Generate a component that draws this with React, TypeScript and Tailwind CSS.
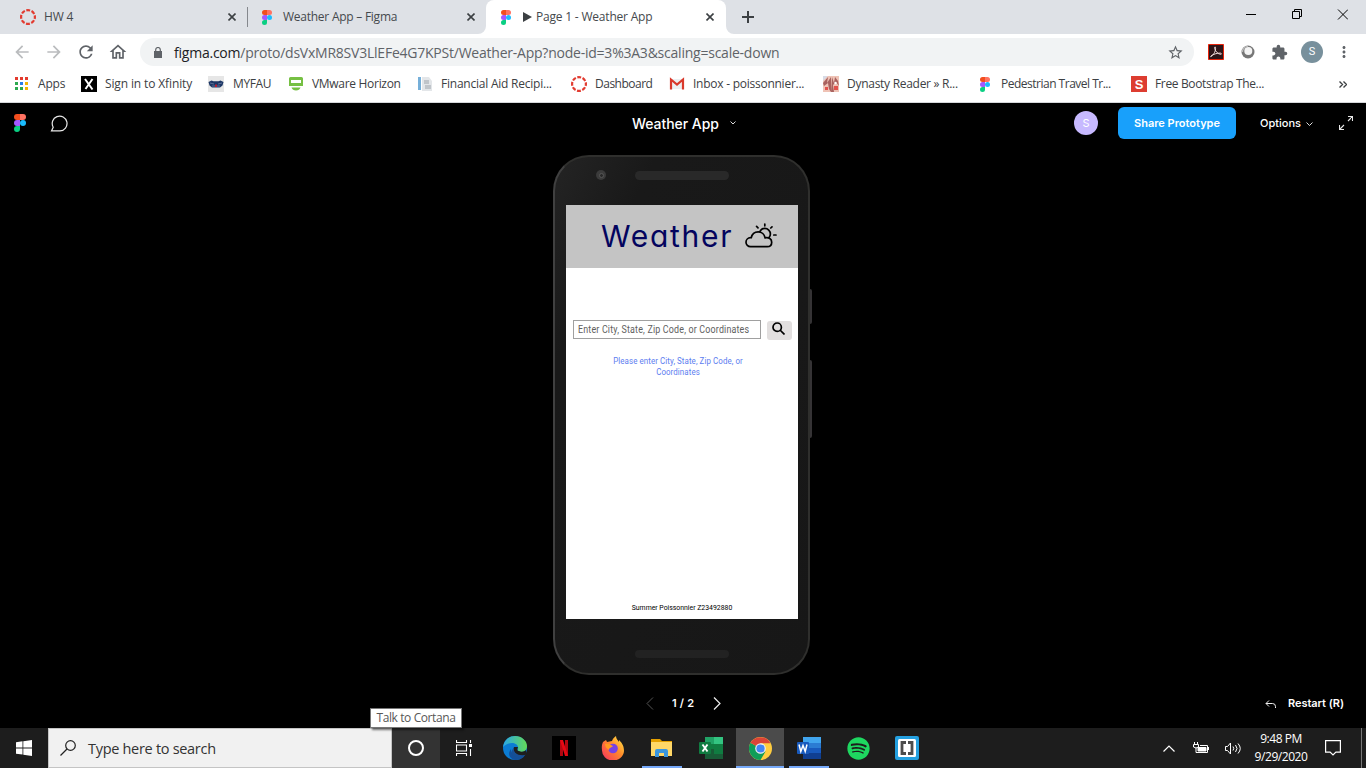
import type { ReactNode } from "react";
import {
  MdArrowBack,
  MdArrowForward,
  MdExtension,
  MdMoreVert,
  MdOutlineHome,
  MdRefresh,
  MdStarBorder,
} from "react-icons/md";
import { FaSpotify } from "react-icons/fa";

const segoe = "font-['Open_Sans','Noto_Sans',sans-serif]";

function FigmaLogo({ className }: { className: string }) {
  return (
    <svg viewBox="0 0 38 57" className={className}>
      <path fill="#1abcfe" d="M19 28.5a9.5 9.5 0 1 1 19 0 9.5 9.5 0 0 1-19 0z" />
      <path fill="#0acf83" d="M0 47.5A9.5 9.5 0 0 1 9.500 38H19v9.500a9.500 9.500 0 1 1-19 0z" />
      <path fill="#ff7262" d="M19 0v19h9.500a9.500 9.500 0 1 0 0-19H19z" />
      <path fill="#f24e1e" d="M0 9.500A9.500 9.500 0 0 0 9.500 19H19V0H9.500A9.500 9.500 0 0 0 0 9.500z" />
      <path fill="#a259ff" d="M0 28.500A9.500 9.500 0 0 0 9.500 38H19V19H9.500A9.500 9.500 0 0 0 0 28.500z" />
    </svg>
  );
}

function CanvasLogo() {
  return (
    <svg viewBox="0 0 16 16" className="size-4 shrink-0">
      <circle cx="8" cy="8" r="6.900" fill="none" stroke="#e23b30" strokeWidth="2.200" strokeDasharray="3.900 1.520" strokeDashoffset="1.950" />
    </svg>
  );
}

function CloseIcon() {
  return (
    <svg viewBox="0 0 8 8" className="size-2 shrink-0">
      <path d="M.5.5l7 7M7.500.5l-7 7" stroke="#3c4043" strokeWidth="1.600" />
    </svg>
  );
}

function TabStrip() {
  return (
    <div className="flex h-[34px] bg-[#dee1e6] text-[12px] text-[#45494d]">
      <div className="flex w-[247px] items-center pl-5 pr-[11px]">
        <CanvasLogo />
        <span className="ml-[8px] grow tracking-[-0.2px]">HW 4</span>
        <CloseIcon />
      </div>
      <div className="mt-[7px] h-5 w-px bg-[#85888d]" />
      <div className="flex w-[238px] items-end">
        <div className="flex h-[34px] w-[230px] items-center pl-[14px] pr-[3px]">
          <FigmaLogo className="h-[15px] w-[10px]" />
          <span className="ml-[11px] grow whitespace-nowrap tracking-[-0.25px]">Weather App – Figma</span>
          <CloseIcon />
        </div>
        <svg viewBox="0 0 8 8" className="size-2">
          <path d="M8 0v8H0a8 8 0 0 0 8-8z" fill="#fff" />
        </svg>
      </div>
      <div className="flex w-[240px] items-center rounded-t-lg bg-white pl-[15px] pr-[12px]">
        <FigmaLogo className="h-[15px] w-[10px]" />
        <svg viewBox="0 0 9 10" className="ml-3 mr-1 h-[10px] w-[9px]">
          <path d="M0 0l9 5-9 5z" fill="#3c4043" />
        </svg>
        <span className="grow whitespace-nowrap tracking-[-0.2px]">Page 1 - Weather App</span>
        <CloseIcon />
      </div>
      <div className="flex w-2 items-end">
        <svg viewBox="0 0 8 8" className="size-2">
          <path d="M0 0v8h8a8 8 0 0 1-8-8z" fill="#fff" />
        </svg>
      </div>
      <svg viewBox="0 0 12 12" className="ml-2 mt-[11px] size-3">
        <path d="M6 0v12M0 6h12" stroke="#3c4043" strokeWidth="2" />
      </svg>
      <div className="ml-auto flex pr-[18px] pt-[9px]">
        <svg viewBox="0 0 102 11" className="h-[11px] w-[102px]" fill="none" stroke="#000" strokeWidth="1">
          <path d="M0 5.500h10M46.500 2.500h7v7h-7zM48.500 2.500v-2h7v7h-2M92 .5l10 10M102 .5l-10 10" />
        </svg>
      </div>
    </div>
  );
}

function Toolbar() {
  return (
    <div className="flex h-9 items-center bg-white text-[#5f6368]">
      <div className="flex w-[140px] items-center gap-3 pl-3">
        <MdArrowBack size={20} color="#babcbe" />
        <MdArrowForward size={20} color="#babcbe" />
        <MdRefresh size={20} />
        <MdOutlineHome size={20} />
      </div>
      <div className="flex h-7 w-[1054px] items-center rounded-full bg-[#f1f3f4] pl-[14px] pr-[10px]">
        <svg viewBox="0 0 8 11" className="h-[11px] w-2">
          <path d="M0 4h8v7H0z" fill="#5f6368" />
          <path d="M1.700 4V2.800a2.300 2.300 0 0 1 4.600 0V4" fill="none" stroke="#5f6368" strokeWidth="1.200" />
        </svg>
        <span className="ml-3 grow whitespace-nowrap text-[14px] tracking-[-0.23px]">
          <span className="text-[#202124]">figma.com</span>/proto/dsVxMR8SV3LlEFe4G7KPSt/Weather-App?node-id=3%3A3&amp;scaling=scale-down
        </span>
        <MdStarBorder size={17} />
      </div>
      <svg viewBox="0 0 16 16" className="ml-[14px] size-4">
        <path d="M.5.5h15v15H.5z" fill="#2d1518" stroke="#e8230b" />
        <path d="M3 12.500c3-2 5-6 4.500-9-.2-1.300-1.200-.6-.8 1 .8 3 3 5.500 6 5.800 1.300 0 .9-1.300-.9-1.200-3 .1-6.300 1-8.800 2.900-.6.7-.4.9 0 .5z" fill="none" stroke="#f3dfdd" />
      </svg>
      <svg viewBox="0 0 14 14" className="ml-[17px] size-[14px]">
        <circle cx="7" cy="7" r="6.500" fill="#777" />
        <circle cx="7.300" cy="6" r="4" fill="#f4f4f4" />
        <path d="M1.500 7A5.500 5.500 0 0 1 7 1.300" fill="none" stroke="#bbb" strokeWidth="1.200" />
      </svg>
      <MdExtension size={17} className="ml-[16px]" />
      <div className="ml-[13px] flex size-[22px] items-center justify-center rounded-full bg-[#78909c] font-['Roboto',sans-serif] text-[11px] text-white">S</div>
      <MdMoreVert size={18} className="ml-3" />
    </div>
  );
}

const bookmarks: { label: string; box: string; icon: ReactNode }[] = [
  {
    label: "Apps",
    box: "w-[67px] tracking-[-0.2px]",
    icon: (
      <svg viewBox="0 0 16 16" className="size-4 shrink-0">
        <path d="M1 1h3v3H1zM6 1h3v3H6zM11 1h3v3h-3z" fill="#e33b2e" />
        <path d="M1 6h3v3H1zM1 11h3v3H1zM6 11h3v3H6z" fill="#2da94f" />
        <path d="M6 6h3v3H6z" fill="#2a7de9" />
        <path d="M11 6h3v3h-3zM11 11h3v3h-3z" fill="#f5b400" />
      </svg>
    ),
  },
  {
    label: "Sign in to Xfinity",
    box: "w-[127px] tracking-[-0.13px]",
    icon: (
      <svg viewBox="0 0 16 16" className="size-4 shrink-0">
        <path d="M0 0h16v16H0z" />
        <path d="M4 3l7.500 10.500M11.500 3L4.500 13" stroke="#fff" strokeWidth="2" />
      </svg>
    ),
  },
  {
    label: "MYFAU",
    box: "w-[80px] tracking-[-0.4px]",
    icon: (
      <svg viewBox="0 0 16 16" className="mr-px size-4 shrink-0">
        <path d="M0 0h16v16H0z" fill="#e6e6e6" />
        <path d="M.5 6l3-1.500 2 .8h5l2-.8 3 1.500-1 3.500L12 11.500H4L1.500 9.500z" fill="#1d3766" />
        <path d="M2 7l4 1M14 7l-4 1M4 10h8" stroke="#6d7ea3" strokeWidth=".8" />
        <path d="M7 8.500h2V11H7z" fill="#b62034" />
      </svg>
    ),
  },
  {
    label: "VMware Horizon",
    box: "w-[129px] tracking-[-0.3px]",
    icon: (
      <svg viewBox="0 0 16 16" className="size-4 shrink-0">
        <path d="M2.500 1h11A1.500 1.500 0 0 1 15 2.500V10H1V2.500A1.500 1.500 0 0 1 2.500 1z" fill="#76c043" />
        <path d="M3 4h10v3H3z" fill="#fff" />
        <path d="M3.500 11.500h9q-1 3-4.500 3t-4.500-3z" fill="#76c043" />
      </svg>
    ),
  },
  {
    label: "Financial Aid Recipi...",
    box: "w-[154px] tracking-[-0.23px]",
    icon: (
      <svg viewBox="0 0 16 16" className="size-4 shrink-0">
        <path d="M1 1h3v13H1z" fill="#75afd9" />
        <path d="M5 1h7l3 4v10H5z" fill="#e3e6e9" />
        <path d="M7 5h5M7 7h5M8 10h6M8 12h6" stroke="#9ca3aa" />
      </svg>
    ),
  },
  { label: "Dashboard", box: "w-[98px] tracking-[-0.5px]", icon: <CanvasLogo /> },
  {
    label: "Inbox - poissonnier...",
    box: "w-[154px] tracking-[-0.25px]",
    icon: (
      <svg viewBox="0 0 16 16" className="size-4 shrink-0">
        <path d="M2 3h12v10H2z" fill="#eceff1" />
        <path d="M2 13.500V3.500l6 5 6-5v10" fill="none" stroke="#d9392c" strokeWidth="2.200" />
      </svg>
    ),
  },
  {
    label: "Dynasty Reader » R...",
    box: "w-[154px] tracking-[-0.28px]",
    icon: (
      <svg viewBox="0 0 16 16" className="size-4 shrink-0">
        <path d="M0 0h16v16H0z" fill="#efc3b6" />
        <path d="M0 0h5L0 5z" fill="#d7dbe6" />
        <path d="M0 7l5-6-1 6 4-6v15l-2-3-1-6-4 3zM9 1l2 6 1-6 3 4 1 5-3-4-3 3 1 7H8z" fill="#a8625f" />
        <path d="M11 10h4v4h-4zM2 11h3v3H2z" fill="#e2534e" />
        <circle cx="12.500" cy="7" r="1.200" fill="#fff" />
      </svg>
    ),
  },
  {
    label: "Pedestrian Travel Tr...",
    box: "w-[154px] tracking-[-0.5px]",
    icon: <FigmaLogo className="ml-[3px] mr-[3px] h-[15px] w-[10px] shrink-0" />,
  },
  {
    label: "Free Bootstrap The...",
    box: "w-[150px] tracking-[-0.35px]",
    icon: (
      <span className="flex size-4 shrink-0 items-center justify-center bg-[#dd3d31] font-['Liberation_Sans',sans-serif] text-[13px] font-bold leading-none text-white">S</span>
    ),
  },
];

function BookmarksBar() {
  return (
    <div className="flex h-[33px] items-center border-b border-[#d5d7da] bg-white pb-[6px] pl-[14px] pt-[2px] text-[12px] text-[#3c4043]">
      {bookmarks.map((b) => (
        <div key={b.label} className={`flex shrink-0 items-center gap-2 whitespace-nowrap ${b.box}`}>
          {b.icon}
          <span>{b.label}</span>
        </div>
      ))}
      <svg viewBox="0 0 8 7" className="ml-auto mr-[19px] h-[7px] w-2">
        <path d="M.5.5l3 3-3 3M4.500.5l3 3-3 3" fill="none" stroke="#3c4043" strokeWidth="1.400" />
      </svg>
    </div>
  );
}

function PrototypeHeader() {
  return (
    <div className="flex h-[41px] items-center pb-px font-['Inter',sans-serif] text-white">
      <div className="flex w-[632px] items-center pl-[14px]">
        <FigmaLogo className="h-[18px] w-3" />
        <svg viewBox="0 0 18 17" className="ml-6 h-[17px] w-[18px]" fill="none" stroke="#e8e8e8" strokeWidth="1.200">
          <path d="M3.200 12.200A7.400 7.400 0 1 1 10 15.900H1.500z" />
        </svg>
      </div>
      <div className="flex w-[442px] items-center">
        <span className="whitespace-nowrap text-[14px] font-medium tracking-[-0.05px]">Weather App</span>
        <svg viewBox="0 0 6 4" className="ml-[11px] h-1 w-[6px]">
          <path d="M.5.5L3 3 5.500.5" fill="none" stroke="#ddd" />
        </svg>
      </div>
      <div className="flex size-6 items-center justify-center rounded-full bg-[#c7b9ff] text-[11px]">S</div>
      <div className="ml-5 flex h-8 w-[118px] items-center justify-center whitespace-nowrap rounded-md bg-[#18a0fb] text-[11px] font-semibold">Share Prototype</div>
      <span className="ml-6 text-[11px] font-medium">Options</span>
      <svg viewBox="0 0 7 4" className="ml-[5px] mt-0.5 h-1 w-[7px]">
        <path d="M.5.500L3.500 3.500 6.500.5" fill="none" stroke="#ddd" />
      </svg>
      <svg viewBox="0 0 14 14" className="ml-auto mr-[13px] size-[14px]" fill="none" stroke="#e8e8e8" strokeWidth="1.100">
        <path d="M9 .500h4.500v4.500M13.500.500L9 5M.5 9v4.500h4.500M.5 13.500L5 9" />
      </svg>
    </div>
  );
}

function PhoneScreen() {
  return (
    <div className="flex h-[414px] w-[232px] flex-col bg-white font-['Roboto',sans-serif]">
      <div className="flex h-[63px] items-center bg-[#c4c4c4] pb-px pl-[35px]">
        <span className="w-[144px] whitespace-nowrap font-['Inter',sans-serif] text-[30px] font-[380] leading-none tracking-[1.700px] text-[#03045e] [font-feature-settings:'cv11']">Weather</span>
        <svg viewBox="0 0 32 26" className="h-[26px] w-8" fill="none" stroke="#000" strokeWidth="1.700" strokeLinecap="round">
          <circle cx="19.800" cy="11" r="5.600" />
          <path d="M5.500 23.700a4.500 4.500 0 0 1 0-9h.8C7 11 9.800 8.800 13.200 8.800c3.500 0 6.300 2.600 6.900 6 3.800-.6 6.600 1.200 6.600 4.400 0 2.700-1.800 4.500-4.500 4.500z" fill="#c4c4c4" />
          <path d="M19.800 1v1.800M25.800 5L27 3.800M28.800 12h2.200M13 4.800l-1.400-1.400" />
        </svg>
      </div>
      <div className="mt-[52px] flex h-5 items-start pl-[7px]">
        <div className="flex h-[19px] w-[188px] items-center border border-[#a0a0a0] pl-1">
          <span className="origin-left scale-x-[.89] whitespace-nowrap text-[10px] tracking-[0.2px] text-[#606060]">Enter City, State, Zip Code, or Coordinates</span>
        </div>
        <div className="ml-[6px] mt-px flex h-[19px] w-[25px] items-center justify-center rounded-[3px] bg-[#e2dfdf] pb-1 pr-0.5">
          <svg viewBox="0 0 13 13" className="size-[13px]" fill="none" stroke="#000" strokeWidth="1.700">
            <path d="M8 8l4.500 4.500" />
            <circle cx="5.200" cy="5.200" r="4.200" />
          </svg>
        </div>
      </div>
      <p className="mr-[8px] mt-[16px] scale-x-[.88] text-center text-[9px] leading-[10.500px] tracking-[0.1px] text-[#5c7df0]">
        Please enter City, State, Zip Code, or
        <br />
        Coordinates
      </p>
      <p className="mb-[6px] mt-auto scale-x-[.86] text-center text-[8px] leading-[11px] text-black">Summer Poissonnier Z23492880</p>
    </div>
  );
}

function Phone() {
  return (
    <div className="ml-[553px] flex h-[520px]">
      <div className="flex h-[520px] w-[257px] flex-col rounded-[36px] border-2 border-[#2f2f2d] border-l-[#404040] bg-[#191919] bg-linear-to-br from-[#242424] via-[#191919] via-20% to-[#171717] pl-[11px] pt-[13px]">
        <div className="flex h-[35px] items-start">
          <div className="ml-[30px] flex size-[10px] items-center justify-center rounded-full bg-[#3b3b3b]">
            <div className="size-[5px] rounded-full border border-[#565656] bg-[#292929]" />
          </div>
          <div className="ml-[29px] mt-[0.5px] h-[9px] w-[94px] rounded-full bg-[#292929]" />
        </div>
        <PhoneScreen />
        <div className="ml-[69px] mt-[31px] h-[8px] w-[94px] rounded-full bg-[#222]" />
      </div>
      <div className="flex flex-col pt-[134px]">
        <div className="h-[35px] w-[2px] rounded-r-sm bg-[#353335]" />
        <div className="mt-[36px] h-[78px] w-[2px] rounded-r-sm bg-[#353335]" />
      </div>
    </div>
  );
}

function PrototypeFooter() {
  return (
    <div className="flex h-[49px] items-center font-['Inter',sans-serif] text-[11px] font-semibold text-white">
      <svg viewBox="0 0 8 13" className="ml-[646px] h-[13px] w-2">
        <path d="M7 .5l-6 6 6 6" fill="none" stroke="#555" />
      </svg>
      <span className="ml-[18px] whitespace-nowrap tracking-[0.2px]">1 / 2</span>
      <svg viewBox="0 0 8 13" className="ml-[19px] h-[13px] w-2">
        <path d="M1 .5l6 6-6 6" fill="none" stroke="#eee" strokeWidth="1.200" />
      </svg>
      <svg viewBox="0 0 11 8" className="ml-auto h-2 w-[11px]">
        <path d="M4 .5l-3 3 3 3M1 3.500h6.500q3 0 3 3V8" fill="none" stroke="#eee" />
      </svg>
      <span className="ml-3 mr-[22px] tracking-[-0.05px]">Restart (R)</span>
    </div>
  );
}

const ExplorerIcon = (
  <svg viewBox="0 0 24 24" className="size-6">
    <path d="M1 3h9l2 2h10v3H1z" fill="#e5a000" />
    <path d="M1 6h21v14H1z" fill="#ffd767" />
    <path d="M5 21v-6q0-2 2-2h9q2 0 2 2v6h-4v-4H9v4z" fill="#3b96dd" />
  </svg>
);

const EdgeIcon = (
  <svg viewBox="0 0 24 24" className="size-6">
    <defs>
      <linearGradient id="edge-top" x1="0" x2="1">
        <stop stopColor="#2aa8e8" />
        <stop offset="1" stopColor="#63d957" />
      </linearGradient>
    </defs>
    <circle cx="12" cy="12" r="12" fill="#0b7cd3" />
    <path d="M0 11C1 4 6 0 12 0c7 0 12 5 12 10 0 4-3 6-6 6s-4-1-3-3c1-4-3-6-6-6-4 0-7 2-9 4z" fill="url(#edge-top)" />
    <path d="M8 13c0 5 4 8 9 8 2 0 4-1 5-2-2 4-6 5-10 5-5-1-8-6-4-11z" fill="#124f99" />
    <path d="M11 11c-2 4 2 9 8 9 2 0 4-2 4-2v-4c-2 2-5 2-7 1-2 0-2-2-1-4z" fill="#1e1e1e" />
    <path d="M11 12c-1 5 4 8 11 7-3 4-8 3-11 1s-3-6 0-8z" fill="#164f95" />
  </svg>
);

const NetflixIcon = (
  <svg viewBox="0 0 24 24" className="size-6">
    <path d="M0 0h24v24H0z" />
    <path d="M8 4h3v16H8zM13 4h3v16h-3z" fill="#b20710" />
    <path d="M8 4h3l5 16h-3z" fill="#e50914" />
  </svg>
);

const FirefoxIcon = (
  <svg viewBox="0 0 24 24" className="size-6">
    <defs>
      <linearGradient id="fox" x1="1" x2="0" y2="1">
        <stop stopColor="#fff04a" />
        <stop offset=".45" stopColor="#ff8a2a" />
        <stop offset="1" stopColor="#f72c65" />
      </linearGradient>
    </defs>
    <path d="M2 6l3-2 1 2 5-1c1-3 3-4 4-5 0 3 2 4 3 6V4c4 4 5 7 5 11a11 10 0 0 1-22-1c-.5-3 0-6 1-8z" fill="url(#fox)" />
    <circle cx="12" cy="12.500" r="4.800" fill="#7542e5" />
    <path d="M4 8c4-1 5 1 8 2-1 2-4 1-4 4-2-1-4-3-4-6z" fill="#ff9a20" />
  </svg>
);

const ExcelIcon = (
  <svg viewBox="0 0 24 24" className="size-6">
    <path d="M6 1h9v22H6z" fill="#21a366" />
    <path d="M15 1h9v7h-9z" fill="#33c481" />
    <path d="M15 8h9v5h-9zM6 8h9v5H6z" fill="#107c41" />
    <path d="M6 13h18v10H6z" fill="#185c37" />
    <path d="M15 13h9v5h-9z" fill="#107c41" />
    <rect y="6" width="12" height="12" rx="1" fill="#107c41" />
    <path d="M3.500 8.500l5 7M8.500 8.500l-5 7" stroke="#fff" strokeWidth="1.900" />
  </svg>
);

const ChromeIcon = (
  <svg viewBox="0 0 24 24" className="size-[23px]">
    <circle cx="12" cy="12" r="12" fill="#ffcd40" />
    <path d="M12 12L1.600 6A12 12 0 0 0 12 24l5.200-9z" fill="#0f9d58" />
    <path d="M12 12L1.600 6a12 12 0 0 1 20.800 0.500H12z" fill="#db4437" />
    <circle cx="12" cy="12" r="5.500" fill="#f1f1f1" />
    <circle cx="12" cy="12" r="4.300" fill="#4285f4" />
  </svg>
);

const WordIcon = (
  <svg viewBox="0 0 24 24" className="size-6">
    <path d="M6 1h18v6H6z" fill="#41a5ee" />
    <path d="M6 7h18v5H6z" fill="#2b7cd3" />
    <path d="M6 12h18v5H6z" fill="#185abd" />
    <path d="M6 17h18v6H6z" fill="#103f91" />
    <rect y="6" width="12" height="12" rx="1" fill="#185abd" />
    <path d="M2 8.500l1.800 7 2.200-6 2.200 6 1.800-7" fill="none" stroke="#fff" strokeWidth="1.500" />
  </svg>
);

const BracketsIcon = (
  <svg viewBox="0 0 24 24" className="size-6">
    <rect width="24" height="24" rx="2" fill="#24a0e0" />
    <rect x="3" y="3" width="18" height="18" rx="1.500" fill="#fff" />
    <path d="M11 6.500H7v11h4M13 6.500h4v11h-4" fill="none" stroke="#4c4c4c" strokeWidth="2.800" />
  </svg>
);

const taskbarApps: { name: string; icon: ReactNode; box: string; bar: string }[] = [
  { name: "edge", icon: EdgeIcon, box: "", bar: "" },
  { name: "netflix", icon: NetflixIcon, box: "", bar: "" },
  { name: "firefox", icon: FirefoxIcon, box: "", bar: "" },
  { name: "explorer", icon: ExplorerIcon, box: "", bar: "w-10 bg-[#76a9f9]" },
  { name: "excel", icon: ExcelIcon, box: "", bar: "" },
  { name: "chrome", icon: ChromeIcon, box: "bg-[#4b4b4b]", bar: "w-12 bg-[#76a9f9]" },
  { name: "word", icon: WordIcon, box: "", bar: "w-10 bg-[#76a9f9]" },
  { name: "spotify", icon: <FaSpotify size={23} color="#1ed760" />, box: "", bar: "" },
  { name: "brackets", icon: BracketsIcon, box: "", bar: "" },
];

function Taskbar() {
  return (
    <div className="flex h-10 bg-[#1d1d1d]">
      <div className="flex w-12 items-center justify-center">
        <svg viewBox="0 0 16 16" className="size-4" fill="#fff">
          <path d="M0 2.200l6.500-.9v6.200H0zM7.300 1.200L16 0v7.500H7.300zM0 8.400h6.500v6.200L0 13.700zM7.300 8.400H16V16l-8.700-1.200z" />
        </svg>
      </div>
      <div className="flex w-[344px] items-center border border-[#c4c4c4] bg-[#f1f1f1] pl-[11px]">
        <svg viewBox="0 0 16 16" className="size-4" fill="none" stroke="#222" strokeWidth="1.200">
          <circle cx="10.500" cy="5.500" r="4.800" />
          <path d="M7 9l-6.500 6.500" />
        </svg>
        <span className="ml-3 mt-px whitespace-nowrap text-[14.500px] tracking-[-0.300px] text-[#333]">Type here to search</span>
      </div>
      <div className="flex w-12 items-center justify-center bg-[#333]">
        <div className="size-4 rounded-full border-2 border-white" />
      </div>
      <div className="flex w-[51px] items-center pl-4">
        <svg viewBox="0 0 16 16" className="size-4" fill="none" stroke="#fff" strokeWidth="1.100">
          <path d="M.5 0v2.500h10V0M.5 5h10v6H.5zM.5 16v-2.500h10V16M14.500 0v3M14.500 9v7" />
          <path d="M13 4h3v3h-3z" fill="#fff" stroke="none" />
        </svg>
      </div>
      <div className="flex gap-px">
        {taskbarApps.map((app) => (
          <div key={app.name} className={`flex w-12 flex-col items-center justify-between ${app.box}`}>
            <div className="flex h-[38px] items-center pt-0.5">{app.icon}</div>
            <div className={`h-0.5 ${app.bar}`} />
          </div>
        ))}
      </div>
      <div className="ml-auto flex items-center pr-1 text-white">
        <svg viewBox="0 0 12 7" className="h-[7px] w-3" fill="none" stroke="#fff" strokeWidth="1.200">
          <path d="M.5 6.500l5.500-5.500 5.500 5.500" />
        </svg>
        <svg viewBox="0 0 16 12" className="ml-[18px] h-3 w-4" fill="none" stroke="#fff">
          <path d="M1.500 0v2M4.500 0v2M.5 2.500h5v2.500q-2.500 2-5 0zM3 6v4.500h11.500v-7H7M15.500 5v3" />
          <path d="M5 5.500h8V9H5z" fill="#fff" />
        </svg>
        <svg viewBox="0 0 17 13" className="ml-[16px] h-[13px] w-[17px]" fill="none" stroke="#fff">
          <path d="M.5 4.500h2l3-3.500v11l-3-3.500h-2zM8 4.500q1.500 2 0 4M10.500 3q3 3.500 0 7M13 1.500q4.500 5 0 10" />
        </svg>
        <div className="ml-[11px] flex w-[56px] flex-col items-center whitespace-nowrap text-[12px] leading-[18px] tracking-[-0.450px]">
          <span>9:48 PM</span>
          <span>9/29/2020</span>
        </div>
        <svg viewBox="0 0 16 16" className="ml-4 size-4" fill="none" stroke="#fff" strokeWidth="1.200">
          <path d="M.6.600h14.800v11.500h-4.500L8 15l-2.900-2.900H.6z" />
        </svg>
        <div className="ml-5 h-10 w-px bg-[#777]" />
      </div>
    </div>
  );
}

export default function App() {
  return (
    <div className={`relative flex h-[768px] w-[1366px] flex-col overflow-hidden bg-black ${segoe}`}>
      <TabStrip />
      <Toolbar />
      <BookmarksBar />
      <div className="flex h-[625px] flex-col bg-black">
        <PrototypeHeader />
        <div className="pt-[11px]">
          <Phone />
        </div>
        <div className="pt-1">
          <PrototypeFooter />
        </div>
      </div>
      <Taskbar />
      <div className="absolute left-[370px] top-[708px] flex h-5 w-[92px] items-center justify-center whitespace-nowrap border border-[#767676] bg-white text-[12px] tracking-[-0.400px] text-[#575757] shadow-[2px_2px_2px_#0008]">
        Talk to Cortana
      </div>
    </div>
  );
}
